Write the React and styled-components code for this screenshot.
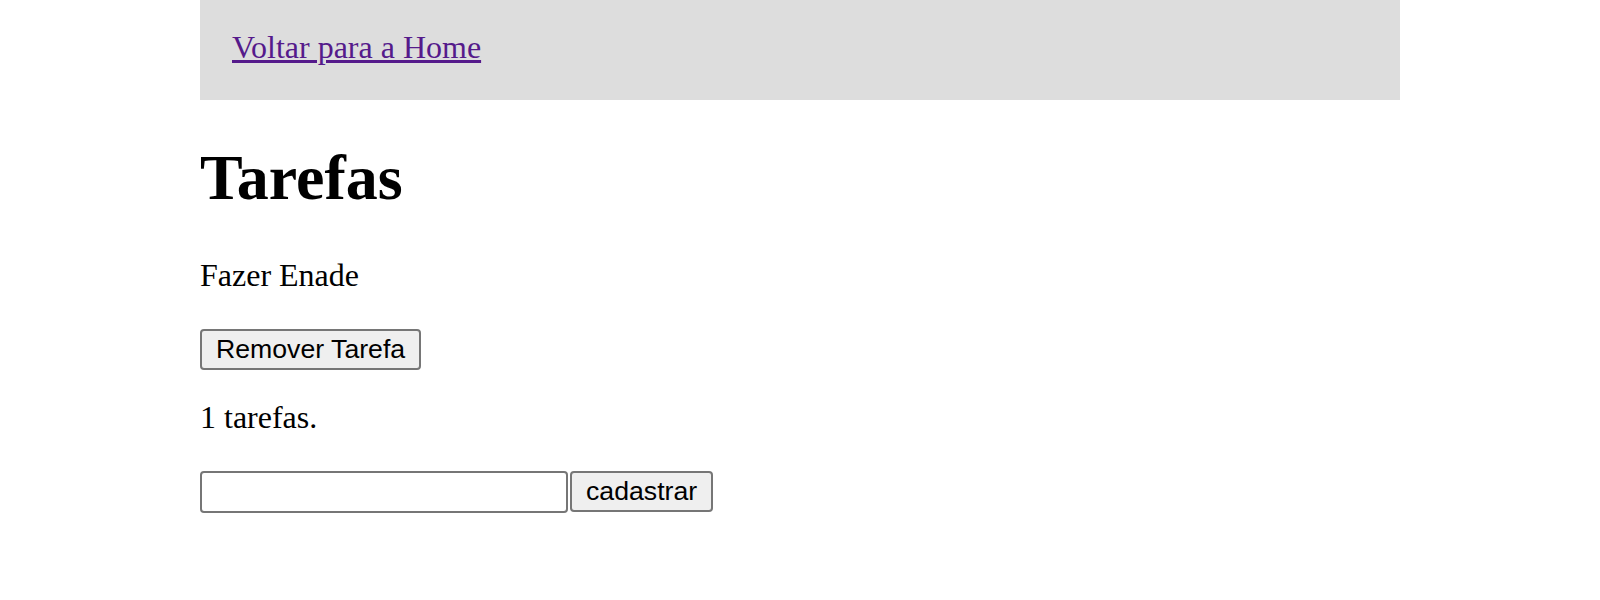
import React from "react";
import styled, { createGlobalStyle } from "styled-components";

const Global = createGlobalStyle`
  html, body { margin: 0; padding: 0; background: #fff; }
  body { font-family: "Liberation Serif", "Times New Roman", serif; color: #000; }
`;

const Page = styled.div`
  width: 1200px;
  margin: 0 auto;
`;

const Header = styled.header`
  height: 100px;
  background: #dddddd;
  display: flex;
  align-items: flex-start;
  padding: 29px 32px 0;
  box-sizing: border-box;
`;

const HomeLink = styled.a`
  font-size: 32px;
  line-height: 36px;
  color: #551a8b;
  text-decoration: underline;
`;

const Main = styled.main`
  display: flex;
  flex-direction: column;
  align-items: flex-start;
`;

const Title = styled.h1`
  font-size: 64px;
  line-height: 72px;
  font-weight: bold;
  margin: 42px 0 0;
`;

const Text = styled.p`
  font-size: 32px;
  line-height: 36px;
  margin: ${(p) => p.$top}px 0 0;
`;

const Button = styled.button`
  font-family: "Liberation Sans", Arial, sans-serif;
  font-size: 26.67px;
  height: 41px;
  padding: 0 14px;
  margin: ${(p) => p.$top || 0}px 0 0;
  border: 2px solid #767676;
  border-radius: 4px;
  background: #efefef;
  color: #000;
  box-sizing: border-box;
`;

const Form = styled.form`
  display: flex;
  gap: 2px;
  margin-top: 36px;
`;

const Input = styled.input`
  width: 368px;
  height: 42px;
  box-sizing: border-box;
  border: 2px solid #767676;
  border-radius: 4px;
  background: #fff;
  padding: 2px 4px;
  font-size: 26.67px;
`;

export default function App() {
  return (
    <Page>
      <Global />
      <Header>
        <HomeLink href="#">Voltar para a Home</HomeLink>
      </Header>
      <Main>
        <Title>Tarefas</Title>
        <Text $top={43}>Fazer Enade</Text>
        <Button $top={36}>Remover Tarefa</Button>
        <Text $top={29}>1 tarefas.</Text>
        <Form onSubmit={(e) => e.preventDefault()}>
          <Input type="text" />
          <Button>cadastrar</Button>
        </Form>
      </Main>
    </Page>
  );
}
